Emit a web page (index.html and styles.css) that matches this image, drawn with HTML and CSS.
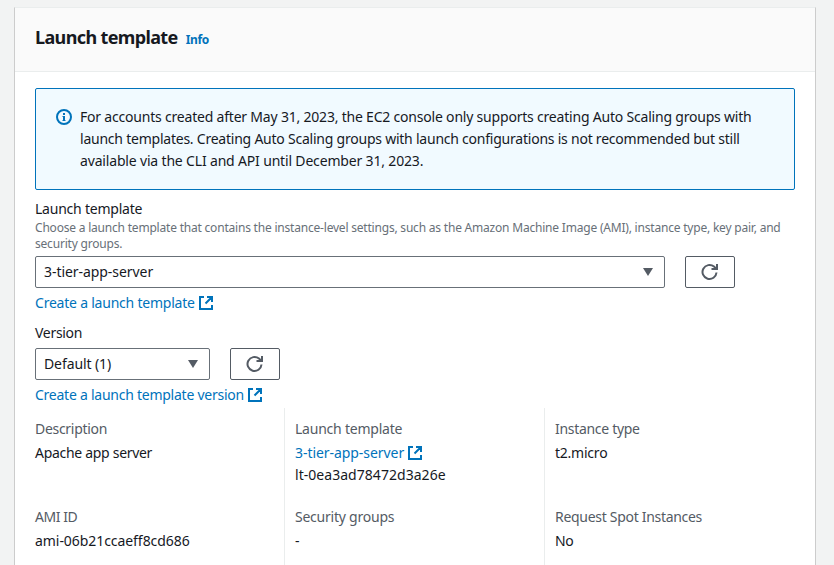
FILE: index.html
```html
<!DOCTYPE html>
<html lang="en">
<head>
<meta charset="utf-8">
<title>Launch template</title>
<link rel="stylesheet" href="styles.css">
</head>
<body>
<svg class="defs" width="0" height="0" aria-hidden="true">
  <symbol id="external" viewBox="0 0 16 16"><path d="M6 2H2v12h12v-4M9 2h5v5M13.500 2.500L7.500 8.500"/></symbol>
  <symbol id="refresh" viewBox="0 0 18 18"><path d="M15.500 9.500A7 7 0 1 1 13 3.600L15 5.500M16 1v5h-5.500"/></symbol>
  <symbol id="caret" viewBox="0 0 12 10"><path d="M1 1h10L6 9z"/></symbol>
</svg>
<main class="card">
  <header class="card-header">
    <h2>Launch template</h2><a class="info">Info</a>
  </header>
  <div class="card-body">
    <section class="alert">
      <svg class="alert-icon" viewBox="0 0 16 16"><circle cx="8" cy="8" r="7"/><path d="M8 4v2M8 7v5"/><path class="serif" d="M6.500 7.500H8M6.500 11.500h3"/></svg>
      <p><span class="l1">For accounts created after May 31, 2023, the EC2 console only supports creating Auto Scaling groups with</span><br><span class="l2">launch templates. Creating Auto Scaling groups with launch configurations is not recommended but still</span><br><span class="l3">available via the CLI and API until December 31, 2023.</span></p>
    </section>
    <section class="field">
      <label><span class="t-label">Launch template</span></label>
      <p class="hint">Choose a launch template that contains the instance-level settings, such as the Amazon Machine Image (AMI), instance type, key pair, and<br>security groups.</p>
      <div class="controls">
        <div class="select wide"><span class="t-app">3-tier-app-server</span><svg class="caret"><use href="#caret"/></svg></div>
        <button class="refresh" aria-label="Refresh"><svg><use href="#refresh"/></svg></button>
      </div>
      <a class="link"><span class="t-create">Create a launch template</span><svg><use href="#external"/></svg></a>
    </section>
    <section class="field">
      <label>Version</label>
      <div class="controls">
        <div class="select narrow"><span class="t-default">Default (1)</span><svg class="caret"><use href="#caret"/></svg></div>
        <button class="refresh" aria-label="Refresh"><svg><use href="#refresh"/></svg></button>
      </div>
      <a class="link"><span class="t-createv">Create a launch template version</span><svg><use href="#external"/></svg></a>
    </section>
    <div class="details">
      <dl>
        <div class="item"><dt>Description</dt><dd>Apache app server</dd></div>
        <div class="item"><dt><span class="t-ami">AMI ID</span></dt><dd><span class="t-amiid">ami-06b21ccaeff8cd686</span></dd></div>
      </dl>
      <dl>
        <div class="item"><dt><span class="t-label">Launch template</span></dt><dd><a class="link"><span class="t-app">3-tier-app-server</span><svg><use href="#external"/></svg></a></dd><dd><span class="t-lt">lt-0ea3ad78472d3a26e</span></dd></div>
        <div class="item"><dt><span class="t-label">Security groups</span></dt><dd>-</dd></div>
      </dl>
      <dl>
        <div class="item"><dt>Instance type</dt><dd><span class="t-label">t2.micro</span></dd></div>
        <div class="item"><dt>Request Spot Instances</dt><dd>No</dd></div>
      </dl>
    </div>
  </div>
</main>
</body>
</html>
```
FILE: styles.css
```css
* { box-sizing: border-box; }
body {
  margin: 0;
  padding: 7px 18px 0 14px;
  height: 565px;
  background: #f2f3f3;
  color: #16191f;
  font: 14px/22px "Noto Sans", sans-serif;
  letter-spacing: -0.3px;
}
h2, p, dl, dd { margin: 0; }
.defs { position: absolute; }
.card {
  display: flex;
  flex-direction: column;
  height: 558px;
  background: #fff;
  border: 1px solid #ccc;
  border-top-color: #eaeded;
  border-bottom: 0;
}
.card-header {
  display: flex;
  align-items: baseline;
  gap: 8px;
  height: 64px;
  padding: 18px 20px 0;
  background: #fafafa;
  border-bottom: 1px solid #eaeded;
}
h2 { font-size: 18px; line-height: 22px; font-weight: 700; letter-spacing: -0.63px; }
.info { font-size: 12px; font-weight: 700; color: #0073bb; }
.card-body {
  display: flex;
  flex-direction: column;
  flex: 1;
  padding: 16px 20px 0;
}
.alert {
  display: flex;
  gap: 8px;
  height: 102px;
  padding: 17px 19px 0 20px;
  border: 1px solid #0073bb;
  border-radius: 2px;
  background: #f1faff;
}
.alert p { white-space: nowrap; }
.alert-icon { width: 16px; height: 16px; margin-top: 3px; fill: none; stroke: #0073bb; stroke-width: 2; }
.alert-icon .serif { stroke-width: 1; }
.field { margin-top: 8px; }
label { display: block; }
.hint { font-size: 12px; line-height: 16px; color: #687078; white-space: nowrap; letter-spacing: -0.203px; }
.controls { display: flex; gap: 20px; margin: 4px 0; }
.select {
  display: flex;
  align-items: center;
  justify-content: space-between;
  height: 32px;
  padding: 0 10px 0 8px;
  border: 1px solid #687078;
  border-radius: 2px;
  background: #fff;
}
.wide { width: 630px; }
.narrow { width: 175px; }
.caret { width: 12px; height: 10px; fill: #545b64; }
.refresh {
  width: 50px;
  height: 32px;
  padding: 0;
  display: grid;
  place-items: center;
  border: 1px solid #545b64;
  border-radius: 2px;
  background: #fff;
}
.refresh svg { width: 18px; height: 18px; fill: none; stroke: #545b64; stroke-width: 2; }
.link { display: flex; align-items: center; gap: 3px; height: 22px; color: #0073bb; }
.link svg { width: 16px; height: 16px; fill: none; stroke: #0073bb; stroke-width: 2; }
.details { display: grid; grid-template-columns: 249px 260px 1fr; flex: 1; margin-top: 2px; }
dl { padding-top: 10px; }
dl + dl { padding-left: 10px; border-left: 1px solid #eaeded; }
.item + .item { margin-top: 20px; }
.item:first-child { min-height: 68px; }
dt { color: #545b64; margin-bottom: 2px; }

/* Tracking per string */
.l1 { letter-spacing: -0.203px; }
.l2 { letter-spacing: -0.23px; }
.l3 { letter-spacing: -0.17px; }
.t-label { letter-spacing: -0.23px; }
.t-app { letter-spacing: -0.06px; }
.t-create { letter-spacing: -0.22px; }
.t-createv { letter-spacing: -0.25px; }
.t-default { letter-spacing: -0.1px; }
.t-ami { letter-spacing: -0.45px; }
.t-amiid { letter-spacing: -0.06px; }
.t-lt { letter-spacing: 0.04px; }
```
